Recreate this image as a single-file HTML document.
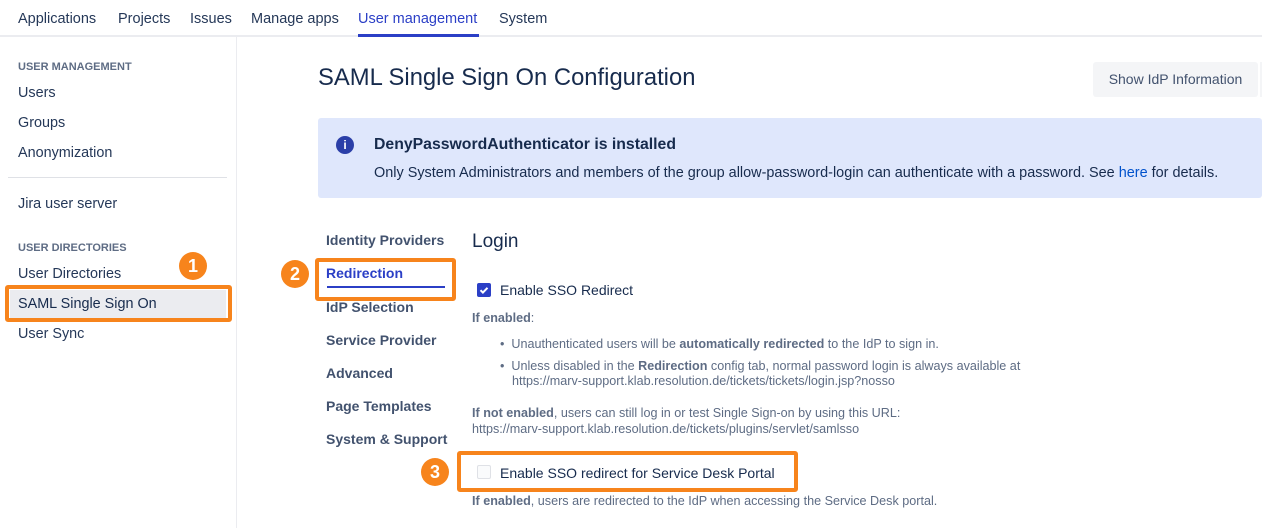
<!DOCTYPE html>
<html><head><style>
body{margin:0;width:1262px;height:528px;overflow:hidden;background:#fff;font-family:"Liberation Sans",sans-serif;color:#172b4d;position:relative}
.a{position:absolute;white-space:nowrap}
.nav{font-size:14.5px;color:#253858;top:11px}
.sb{font-size:14.4px;color:#253858;left:18px}
.hd{font-size:11px;font-weight:bold;color:#5e6c84;left:18px}
.tab{font-size:14px;left:326px;font-weight:bold;color:#42526e}
.s{font-size:12.6px;color:#5e6c84}
.badge{position:absolute;width:28px;height:28px;border-radius:50%;background:#f7841c;color:#fff;font-weight:bold;font-size:18px;text-align:center;line-height:28px}
.ob{position:absolute;border:4px solid #f7841c;border-radius:3px;box-sizing:border-box}
</style></head><body>
<div class="a nav" style="left:18px">Applications</div>
<div class="a nav" style="left:118px">Projects</div>
<div class="a nav" style="left:190px">Issues</div>
<div class="a nav" style="left:251px">Manage apps</div>
<div class="a nav" style="left:358px;color:#2b3fc6">User management</div>
<div class="a nav" style="left:499px">System</div>
<div class="a" style="left:0;top:35px;width:1262px;height:2px;background:#ebecf0"></div>
<div class="a" style="left:358px;top:34px;width:121px;height:3px;background:#2b3fc6"></div>
<div class="a" style="left:236px;top:37px;width:1px;height:491px;background:#ebecf0"></div>

<div class="a hd" style="top:61px">USER MANAGEMENT</div>
<div class="a sb" style="top:85px">Users</div>
<div class="a sb" style="top:115px">Groups</div>
<div class="a sb" style="top:145px">Anonymization</div>
<div class="a" style="left:8px;top:177px;width:219px;height:1px;background:#dfe1e6"></div>
<div class="a sb" style="top:196px">Jira user server</div>
<div class="a hd" style="top:242px">USER DIRECTORIES</div>
<div class="a sb" style="top:266px">User Directories</div>
<div class="a" style="left:10px;top:290px;width:216px;height:28px;background:#ebecf0"></div>
<div class="a sb" style="top:296px;color:#172b4d">SAML Single Sign On</div>
<div class="a sb" style="top:326px">User Sync</div>
<div class="ob" style="left:5px;top:285px;width:227px;height:37px"></div>
<div class="badge" style="left:179px;top:252px">1</div>

<div class="a" style="left:318px;top:64px;font-size:23.8px;color:#172b4d">SAML Single Sign On Configuration</div>
<div class="a" style="left:1093px;top:62px;width:165px;height:35px;background:#f4f5f7;border-radius:3px;font-size:14px;line-height:35px;text-align:center;color:#42526e">Show IdP Information</div>
<div class="a" style="left:1260px;top:62px;width:2px;height:35px;background:#f4f5f7"></div>
<div class="a" style="left:318px;top:118px;width:944px;height:80px;background:#dfe7fc;border-radius:3px"></div>
<div class="a" style="left:336px;top:136px;width:18px;height:18px;border-radius:50%;background:#2b3fa8;color:#fff;font-size:12px;font-weight:bold;text-align:center;line-height:18px">i</div>
<div class="a" style="left:374px;top:136px;font-size:15.8px;font-weight:bold">DenyPasswordAuthenticator is installed</div>
<div class="a" style="left:374px;top:165px;font-size:14.45px">Only System Administrators and members of the group allow-password-login can authenticate with a password. See <span style="color:#0052cc">here</span> for details.</div>

<div class="a tab" style="top:232px">Identity Providers</div>
<div class="a tab" style="top:265px;color:#2b3fc6">Redirection</div>
<div class="a" style="left:327px;top:286px;width:118px;height:2px;background:#2b3fc6"></div>
<div class="a tab" style="top:299px">IdP Selection</div>
<div class="a tab" style="top:332px">Service Provider</div>
<div class="a tab" style="top:365px">Advanced</div>
<div class="a tab" style="top:398px">Page Templates</div>
<div class="a tab" style="top:431px">System &amp; Support</div>
<div class="ob" style="left:315px;top:258px;width:141px;height:43px"></div>
<div class="badge" style="left:281px;top:260px">2</div>

<div class="a" style="left:472px;top:231px;font-size:19px">Login</div>
<div class="a" style="left:477px;top:283px;width:14px;height:14px;background:#2b3fc6;border-radius:2px"><svg width="14" height="14"><path d="M3.5 7.2l2.4 2.4 4.6-4.8" stroke="#fff" stroke-width="2" fill="none"/></svg></div>
<div class="a" style="left:500px;top:282px;font-size:14px">Enable SSO Redirect</div>
<div class="a s" style="left:472px;top:311px"><b>If enabled</b>:</div>
<div class="a s" style="left:500px;top:337px">•&nbsp; Unauthenticated users will be <b>automatically redirected</b> to the IdP to sign in.</div>
<div class="a s" style="left:500px;top:359px">•&nbsp; Unless disabled in the <b>Redirection</b> config tab, normal password login is always available at</div>
<div class="a s" style="left:512px;top:374px">https://marv-support.klab.resolution.de/tickets/tickets/login.jsp?nosso</div>
<div class="a s" style="left:472px;top:406px"><b>If not enabled</b>, users can still log in or test Single Sign-on by using this URL:</div>
<div class="a s" style="left:472px;top:422px">https://marv-support.klab.resolution.de/tickets/plugins/servlet/samlsso</div>
<div class="a" style="left:477px;top:465px;width:12px;height:12px;border:1px solid #dfe1e6;background:#fafbfc;border-radius:2px"></div>
<div class="a" style="left:500px;top:465px;font-size:14px">Enable SSO redirect for Service Desk Portal</div>
<div class="ob" style="left:457px;top:451px;width:341px;height:41px"></div>
<div class="badge" style="left:421px;top:458px">3</div>
<div class="a s" style="left:472px;top:494px"><b>If enabled</b>, users are redirected to the IdP when accessing the Service Desk portal.</div>
</body></html>
